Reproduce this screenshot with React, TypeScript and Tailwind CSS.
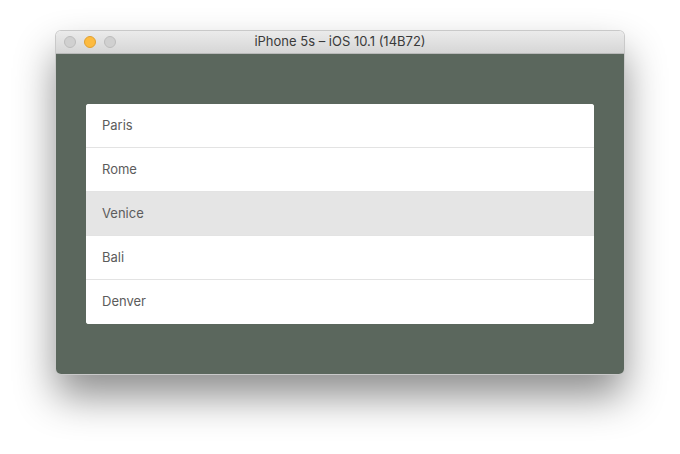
import React from 'react';

const cities = ['Paris', 'Rome', 'Venice', 'Bali', 'Denver'];

export default function App() {
    return (
        <div className="w-[680px] h-[454px] bg-white pt-[31px] pl-[56px]" style={{ fontFamily: '"Inter", "Noto Sans", sans-serif' }}>
            <div className="w-[568px] rounded-[5px] overflow-hidden shadow-[0_22px_40px_rgba(0,0,0,0.45)] ring-1 ring-[#c9c9c9]">
                {/* Title bar */}
                <div className="relative h-[23px] bg-gradient-to-b from-[#ebebeb] to-[#d6d6d6] border-b border-[#b9b9b9] flex items-center">
                    <div className="flex items-center gap-[8px] pl-[8px]">
                        <span className="w-[12px] h-[12px] rounded-full bg-[#d0d0d0] border border-[#bcbcbc]" />
                        <span className="w-[12px] h-[12px] rounded-full bg-[#fdbb40] border border-[#e0a030]" />
                        <span className="w-[12px] h-[12px] rounded-full bg-[#d0d0d0] border border-[#bcbcbc]" />
                    </div>
                    <div className="absolute inset-0 flex items-center justify-center text-[13px] text-[#3a3a3a]">
                        iPhone 5s – iOS 10.1 (14B72)
                    </div>
                </div>

                {/* Simulator screen */}
                <div className="h-[320px] bg-[#5b675d] px-[30px] pt-[50px]">
                    <div className="bg-white rounded-[3px] overflow-hidden">
                        {cities.map((c, i) => (
                            <div
                                key={c}
                                className={`h-[44px] flex items-center pl-[16px] text-[13px] text-[#5c5c5c] ${
                                    c === 'Venice' ? 'bg-[#e5e5e5]' : 'bg-white'
                                } ${i < cities.length - 1 ? 'border-b border-[#e3e3e3]' : ''}`}
                            >
                                {c}
                            </div>
                        ))}
                    </div>
                </div>
            </div>
        </div>
    );
}
